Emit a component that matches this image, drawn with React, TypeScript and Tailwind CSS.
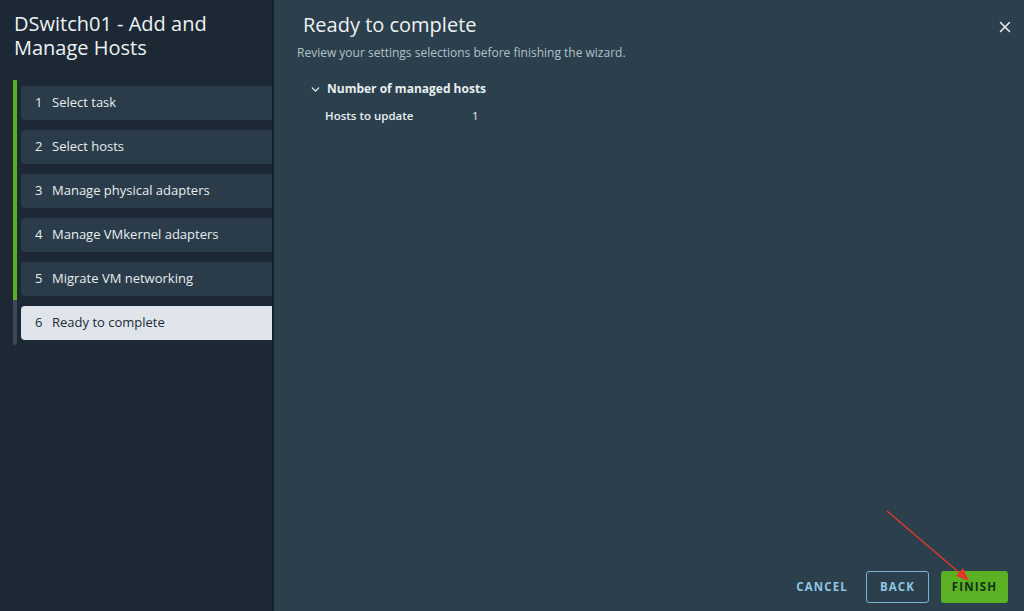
import React from 'react';
import { ChevronDown, X } from 'lucide-react';

const steps = [
  'Select task',
  'Select hosts',
  'Manage physical adapters',
  'Manage VMkernel adapters',
  'Migrate VM networking',
  'Ready to complete',
];

const current = 5;

export default function App() {
  return (
    <div
      className="relative flex h-[611px] w-[1024px] overflow-hidden"
      style={{ fontFamily: '"Open Sans", "Noto Sans", sans-serif' }}
    >
      {/* Steps sidebar */}
      <aside className="flex w-[272px] shrink-0 flex-col bg-[#1c2935] pt-[12px]">
        <h1 className="pl-[14px] pr-4 text-[20px] leading-[24px] text-[#eef2f5]">
          DSwitch01 - Add and Manage Hosts
        </h1>
        <div className="mt-[20px] flex">
          {/* progress rail */}
          <div className="ml-[13px] flex w-[4px] flex-col">
            <div className="h-[220px] bg-[#5bb024]" />
            <div className="h-[45px] rounded-b-sm bg-[#3a4955]" />
          </div>
          <ul className="ml-[4px] flex flex-1 flex-col gap-[10px] pt-[6px]">
            {steps.map((s, i) => (
              <li
                key={s}
                className={
                  i === current
                    ? 'flex h-[34px] items-center rounded-l-sm bg-[#dfe5eb] pl-[14px] text-[13px] text-[#1d2a34]'
                    : 'flex h-[34px] items-center rounded-l-sm bg-[#2a3c49] pl-[14px] text-[13px] text-[#e7edf1]'
                }
              >
                <span className="w-[17px]">{i + 1}</span>
                <span>{s}</span>
              </li>
            ))}
          </ul>
        </div>
      </aside>

      <div className="w-[2px] bg-[#16212b]" />

      {/* Content */}
      <main className="flex flex-1 flex-col bg-[#2b3f4c] text-[#e8eef2]">
        <div className="flex items-start justify-between pl-[29px] pr-[10px] pt-[12px]">
          <h2 className="text-[20px] leading-[26px] text-[#eef2f5]">Ready to complete</h2>
          <X className="mt-[6px] h-[18px] w-[18px] text-[#e8eef2]" strokeWidth={2} />
        </div>
        <p className="mt-[6px] pl-[23px] text-[12px] text-[#b3c1ca]">
          Review your settings selections before finishing the wizard.
        </p>
        <div className="mt-[18px] pl-[35px]">
          <div className="flex items-center gap-[5px]">
            <ChevronDown className="h-[13px] w-[13px] text-[#e8eef2]" strokeWidth={2.5} />
            <span className="text-[12px] font-bold">Number of managed hosts</span>
          </div>
          <div className="mt-[9px] flex pl-[16px] text-[11.5px] font-semibold">
            <span className="w-[147px]">Hosts to update</span>
            <span className="font-normal">1</span>
          </div>
        </div>

        <div className="mt-auto flex items-center justify-end pb-[8px] pr-[16px]">
          <button className="mr-[18px] text-[11.5px] font-bold tracking-[0.1em] text-[#8fc6e0]">
            CANCEL
          </button>
          <button className="mr-[12px] h-[32px] w-[63px] rounded-[3px] border-[1.5px] border-[#79b4d0] text-[11.5px] font-bold tracking-[0.1em] text-[#8fc6e0]">
            BACK
          </button>
          <button className="h-[32px] w-[67px] rounded-[3px] bg-[#5bb024] text-[11.5px] font-bold tracking-[0.1em] text-[#12321a]">
            FINISH
          </button>
        </div>
      </main>

      {/* annotation arrow */}
      <svg className="pointer-events-none absolute left-0 top-0" width="1024" height="611">
        <line x1="887" y1="511" x2="962" y2="575" stroke="#e0392b" strokeWidth="1.5" />
        <polygon points="969,581 956,576 963,568" fill="#e0392b" />
      </svg>
    </div>
  );
}
